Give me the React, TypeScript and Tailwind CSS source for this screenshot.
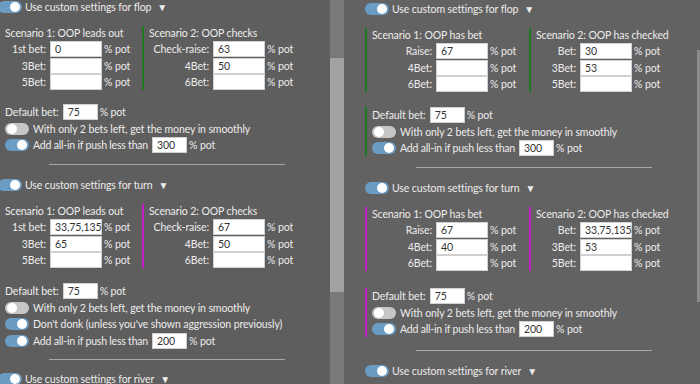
import React from 'react';

type Row = { label: string; value?: string };

const Toggle: React.FC<{ on?: boolean }> = ({ on }) => (
  <span className={`relative inline-block h-[12px] w-[24px] shrink-0 rounded-full ${on ? 'bg-[#6a9cc4]' : 'bg-[#c6c6c6]'}`}>
    <span className={`absolute top-[1px] h-[10px] w-[10px] rounded-full bg-white ${on ? 'right-[2px]' : 'left-[2px]'}`} />
  </span>
);

const Box: React.FC<{ value?: string; w?: string }> = ({ value, w = 'w-[52px]' }) => (
  <span className={`flex h-4 ${w} shrink-0 items-center border border-[#d0d0d0] bg-white pl-[4px] text-[#333]`}>{value}</span>
);

const Header: React.FC<{ street: string }> = ({ street }) => (
  <div className="flex h-[14px] items-center gap-[3px]">
    <Toggle on />
    <span>Use custom settings for {street}</span>
    <span className="ml-[3px] text-[10px]">▼</span>
  </div>
);

const Column: React.FC<{ title: string; rows: Row[]; labelW: string; bar?: string; className?: string }> = ({ title, rows, labelW, bar, className }) => (
  <div className={`flex flex-col ${bar ? `border-l-2 ${bar} pl-[5px]` : ''} ${className ?? ''}`}>
    <div className="flex h-[14px] items-center">{title}</div>
    <div className="mt-px flex flex-col gap-[0.5px]">
      {rows.map(r => (
        <div key={r.label} className="flex h-4 items-center">
          <span className={`${labelW} shrink-0 pr-[4px] text-right`}>{r.label}</span>
          <Box value={r.value} />
          <span className="ml-[2px]">% pot</span>
        </div>
      ))}
    </div>
  </div>
);

const Line: React.FC<{ children: React.ReactNode; on?: boolean; toggle?: boolean }> = ({ children, on, toggle = true }) => (
  <div className="flex h-4 items-center gap-[4px]">
    {toggle && <Toggle on={on} />}
    {children}
  </div>
);

const Divider = ({ className }: { className: string }) => (
  <div className={`ml-[51px] h-px w-[236px] bg-[#a8a8a8] ${className}`} />
);

const AllIn = ({ value }: { value: string }) => (
  <Line on>
    <span className="tracking-[-0.2px]">Add all-in if push less than</span>
    <Box value={value} w="w-[35px]" />
    <span className="ml-[-2px]">% pot</span>
  </Line>
);

const DefaultBet = () => (
  <Line toggle={false}>
    <span>Default bet:</span>
    <Box value="75" w="w-[35px]" />
    <span className="ml-[-2px]">% pot</span>
  </Line>
);

const LeftPanel = () => (
  <div className="ml-[-2px] flex flex-col">
    <Header street="flop" />
    <div className="mt-[12px] flex pl-[7px]">
      <Column title="Scenario 1: OOP leads out" labelW="w-[45px]" className="w-[137px]"
        rows={[{ label: '1st bet:', value: '0' }, { label: '3Bet:' }, { label: '5Bet:' }]} />
      <Column title="Scenario 2: OOP checks" labelW="w-[64px]" bar="border-[#1c7a22]"
        rows={[{ label: 'Check-raise:', value: '63' }, { label: '4Bet:', value: '50' }, { label: '6Bet:' }]} />
    </div>
    <div className="mt-[14px] flex flex-col gap-[0.5px] pl-[7px]">
      <DefaultBet />
      <Line>With only 2 bets left, get the money in smoothly</Line>
      <AllIn value="300" />
    </div>
    <Divider className="mt-[11px]" />
    <div className="mt-[13px]"><Header street="turn" /></div>
    <div className="mt-[12px] flex pl-[7px]">
      <Column title="Scenario 1: OOP leads out" labelW="w-[45px]" className="w-[137px]"
        rows={[{ label: '1st bet:', value: '33,75,135' }, { label: '3Bet:', value: '65' }, { label: '5Bet:' }]} />
      <Column title="Scenario 2: OOP checks" labelW="w-[64px]" bar="border-[#c21fc7]"
        rows={[{ label: 'Check-raise:', value: '67' }, { label: '4Bet:', value: '50' }, { label: '6Bet:' }]} />
    </div>
    <div className="mt-[15px] flex flex-col gap-[0.5px] pl-[7px]">
      <DefaultBet />
      <Line>With only 2 bets left, get the money in smoothly</Line>
      <Line on>Don't donk (unless you've shown aggression previously)</Line>
      <AllIn value="200" />
    </div>
    <Divider className="mt-[10px]" />
    <div className="mt-[12px]"><Header street="river" /></div>
  </div>
);

const RightPanel = () => (
  <div className="flex flex-col pl-[21px] pt-[2px]">
    <Header street="flop" />
    <div className="mt-[12px] flex">
      <Column title="Scenario 1: OOP has bet" labelW="w-[64px]" bar="border-[#1c7a22]" className="w-[164px]"
        rows={[{ label: 'Raise:', value: '67' }, { label: '4Bet:' }, { label: '6Bet:' }]} />
      <Column title="Scenario 2: OOP has checked" labelW="w-[44px]" bar="border-[#1c7a22]"
        rows={[{ label: 'Bet:', value: '30' }, { label: '3Bet:', value: '53' }, { label: '5Bet:' }]} />
    </div>
    <div className="mt-[15px] flex flex-col gap-[0.5px] border-l-2 border-[#1c7a22] pl-[5px]">
      <DefaultBet />
      <Line>With only 2 bets left, get the money in smoothly</Line>
      <AllIn value="300" />
    </div>
    <Divider className="mt-[11px]" />
    <div className="mt-[13px]"><Header street="turn" /></div>
    <div className="mt-[12px] flex">
      <Column title="Scenario 1: OOP has bet" labelW="w-[64px]" bar="border-[#c21fc7]" className="w-[164px]"
        rows={[{ label: 'Raise:', value: '67' }, { label: '4Bet:', value: '40' }, { label: '6Bet:' }]} />
      <Column title="Scenario 2: OOP has checked" labelW="w-[44px]" bar="border-[#c21fc7]"
        rows={[{ label: 'Bet:', value: '33,75,135' }, { label: '3Bet:', value: '53' }, { label: '5Bet:' }]} />
    </div>
    <div className="mt-[17px] flex flex-col gap-[0.5px] border-l-2 border-[#c21fc7] pl-[5px]">
      <DefaultBet />
      <Line>With only 2 bets left, get the money in smoothly</Line>
      <AllIn value="200" />
    </div>
    <Divider className="mt-[13px]" />
    <div className="mt-[13px]"><Header street="river" /></div>
  </div>
);

export default function App() {
  return (
    <div className="flex h-[384px] w-[700px] overflow-hidden whitespace-nowrap text-[10.5px] leading-[14px] tracking-[-0.1px] text-[#ececec]" style={{ fontFamily: 'Lato, sans-serif' }}>
      <div className="w-[330px] overflow-hidden bg-[#5f5e5e]">
        <LeftPanel />
      </div>
      <div className="w-[14px] bg-[#7a797a]">
        <div className="mt-[58px] h-[234px] bg-[#a3a2a2]" />
      </div>
      <div className="flex flex-1 bg-[#636262]">
        <div className="flex-1 overflow-hidden">
          <RightPanel />
        </div>
        <div className="w-[3px]">
          <div className="mt-[50px] h-[252px] bg-[#8c8b8b]" />
        </div>
      </div>
    </div>
  );
}
